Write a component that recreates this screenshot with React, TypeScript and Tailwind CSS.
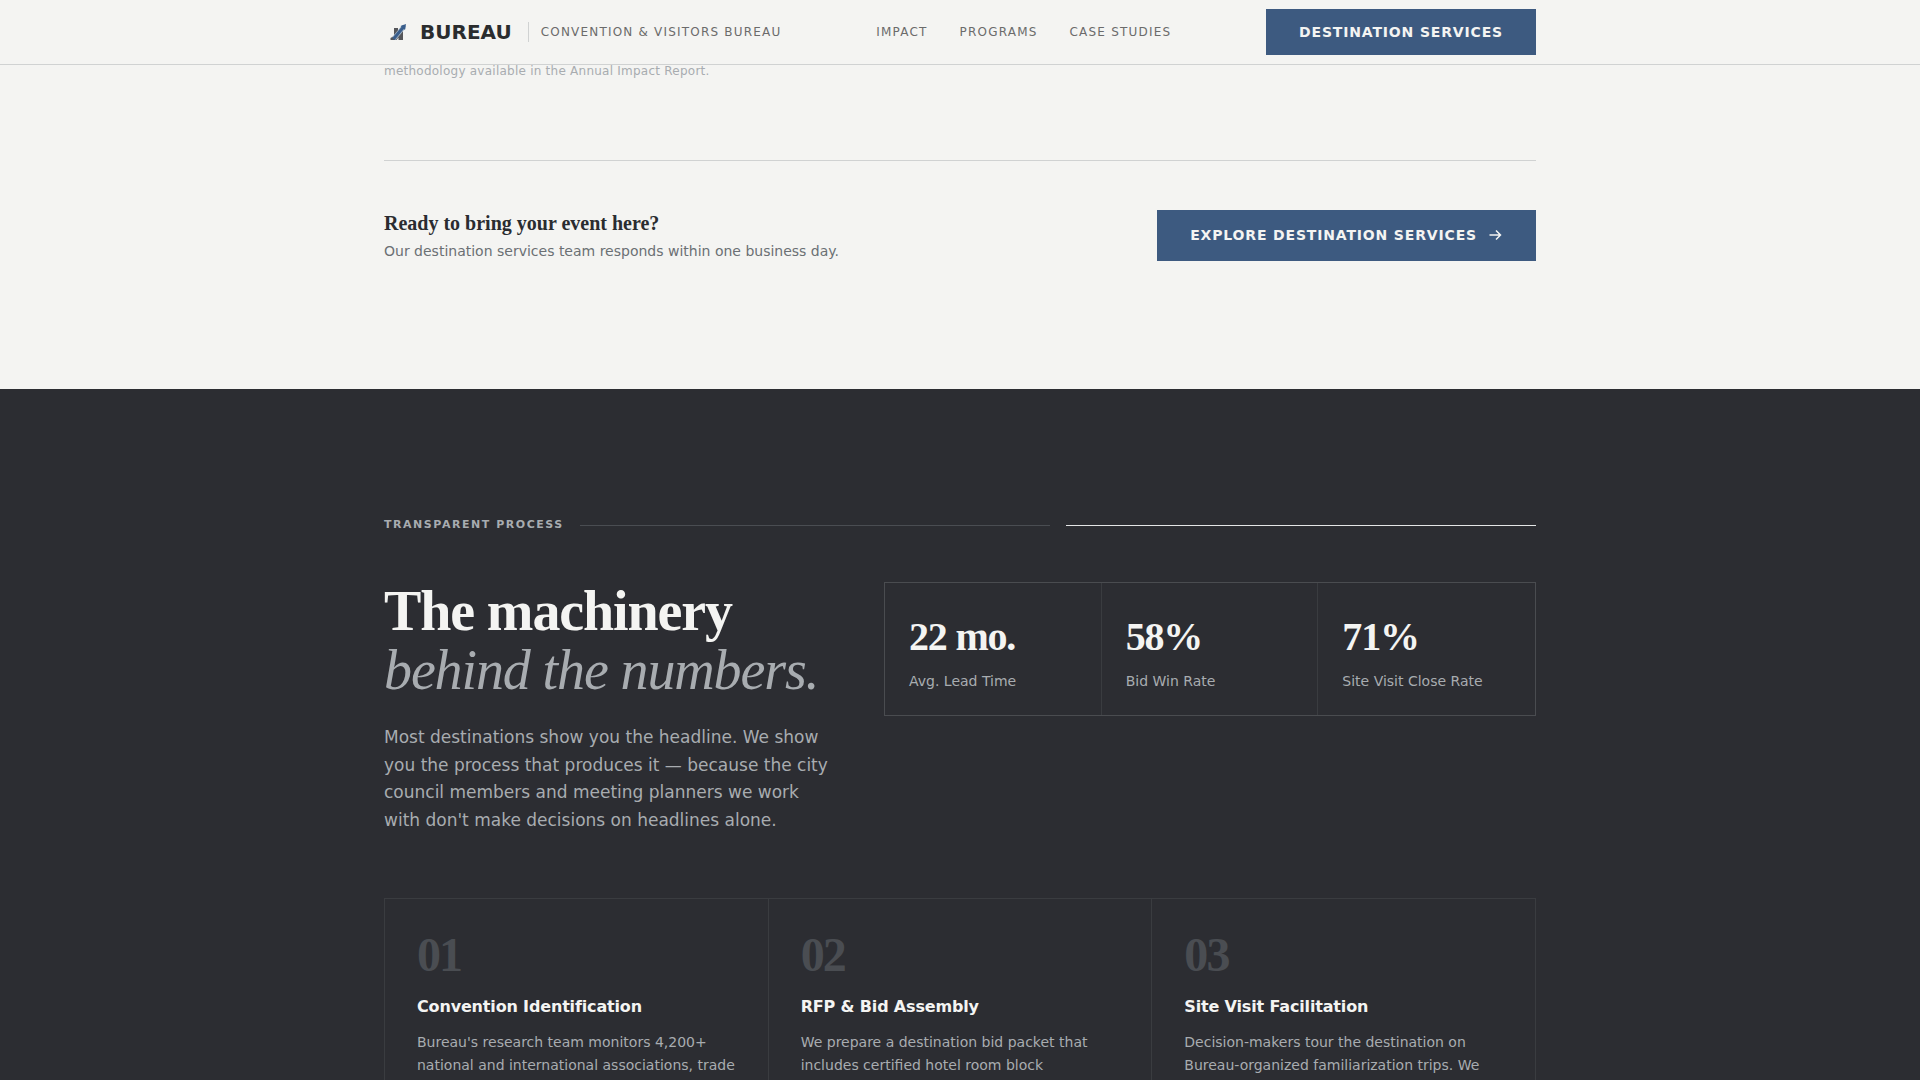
import React from "react";

const navLinks = [
  { label: "Impact", href: "#impact" },
  { label: "Programs", href: "#programs" },
  { label: "Case Studies", href: "#case-studies" },
];

const stats = [
  { value: "22 mo.", label: "Avg. Lead Time" },
  { value: "58%", label: "Bid Win Rate" },
  { value: "71%", label: "Site Visit Close Rate" },
];

const steps = [
  {
    number: "01",
    title: "Convention Identification",
    text: "Bureau's research team monitors 4,200+ national and international associations, trade",
  },
  {
    number: "02",
    title: "RFP & Bid Assembly",
    text: "We prepare a destination bid packet that includes certified hotel room block",
  },
  {
    number: "03",
    title: "Site Visit Facilitation",
    text: "Decision-makers tour the destination on Bureau-organized familiarization trips. We",
  },
];

function Logo() {
  return (
    <svg viewBox="0 0 28 28" className="size-7" aria-hidden="true">
      <path d="M6.500 22v-2l3.500-2v-8h4v3l5-2.500v11.500h-4.500v-2.500l-2 2.500z" fill="#55565a" />
      <path d="M10 20.500 20 8.500" stroke="#a9b8c8" strokeWidth="4.500" />
      <path d="M9.500 21 20.500 7.800" stroke="#3a5e8c" strokeWidth="3" />
      <path d="M16.500 8 22 6l-1 6z" fill="#3a5e8c" />
    </svg>
  );
}

function Arrow() {
  return (
    <svg viewBox="0 0 14 14" className="size-3.5" fill="none" stroke="currentColor" strokeWidth="1.500" aria-hidden="true">
      <path d="M0.500 7h11M7 2.500 11.500 7 7 11.500" />
    </svg>
  );
}

function Header() {
  return (
    <header className="fixed inset-x-0 top-0 z-10 border-b border-[#d0d2d2] bg-[#f4f4f2]">
      <div className="mx-auto flex h-16 max-w-[1200px] items-center justify-between px-6">
        <a href="#top" className="flex items-center gap-2">
          <Logo />
          <span className="text-[20px] font-bold text-[#2a2c2e]">BUREAU</span>
          <span className="ml-2 h-5 w-px bg-[#d0d2d2]" />
          <span className="ml-1 text-xs tracking-[0.1em] text-[#6b6b6b] uppercase">
            Convention &amp; Visitors Bureau
          </span>
        </a>
        <nav className="flex gap-8">
          {navLinks.map((link) => (
            <a key={link.label} href={link.href} className="text-xs tracking-[0.1em] text-[#6b6b6b] uppercase">
              {link.label}
            </a>
          ))}
        </nav>
        <a
          href="#services"
          className="border border-[#3d5a80] bg-[#3d5a80] px-8 py-[11px] text-sm leading-[22px] font-bold tracking-[0.06em] text-[#f4f4f2] uppercase"
        >
          Destination Services
        </a>
      </div>
    </header>
  );
}

function CallToAction() {
  return (
    <section className="mx-auto max-w-[1200px] px-6 pt-[61px] pb-32">
      <p className="pt-px text-xs leading-[18px] tracking-[0.02em] text-[#a8acb0]">
        methodology available in the Annual Impact Report.
      </p>
      <div className="mt-20 flex items-center justify-between border-t border-[#d0d2d2] pt-12">
        <div>
          <h2 className="font-['Liberation_Serif',serif] text-[20px] leading-7 font-bold text-[#2a2c30]">
            Ready to bring your event here?
          </h2>
          <p className="mt-1 text-sm leading-5 text-[#6b7074]">
            Our destination services team responds within one business day.
          </p>
        </div>
        <a
          href="#services"
          className="flex items-center gap-3 border border-[#3d5a80] bg-[#3d5a80] px-8 py-[13px] text-sm leading-[23px] font-bold tracking-[0.06em] text-[#f4f4f2] uppercase"
        >
          Explore Destination Services
          <Arrow />
        </a>
      </div>
    </section>
  );
}

function Process() {
  return (
    <section className="bg-[#2c2d32] pt-32 pb-32 text-[#a8acb0]">
      <div className="mx-auto max-w-[1200px] px-6">
        <div className="flex items-center gap-4">
          <span className="pb-px text-[11px] leading-4 font-bold tracking-[0.14em] uppercase">Transparent Process</span>
          <span className="h-px flex-1 bg-[#4a4d52]" />
          <span className="h-px flex-1 bg-[#e4e5e6]" />
        </div>
        <div className="mt-12 grid grid-cols-12 items-start gap-12">
          <div className="col-span-5">
            <h2 className="font-['Liberation_Serif',serif] text-[56px] leading-[59px] font-bold tracking-[-0.02em] text-[#f4f4f2]">
              The machinery
              <br />
              <em className="font-normal text-[#a8acb0]">behind the numbers.</em>
            </h2>
            <p className="mt-6 text-[17px] leading-relaxed">
              Most destinations show you the headline. We show you the process that produces it — because the city council
              members and meeting planners we work with don't make decisions on headlines alone.
            </p>
          </div>
          <dl className="col-span-7 grid grid-cols-3 divide-x divide-[#3a3c40] border border-[#4a4c50]">
            {stats.map((stat) => (
              <div key={stat.label} className="flex flex-col-reverse px-6 pt-6 pb-[23px]">
                <dt className="mt-[3px] text-sm leading-[22px]">{stat.label}</dt>
                <dd className="font-['Liberation_Serif',serif] text-[40px] leading-[60px] font-bold tracking-[-0.03em] text-[#f4f4f2]">
                  {stat.value}
                </dd>
              </div>
            ))}
          </dl>
        </div>
        <ol className="mt-[63px] grid grid-cols-3 border-t border-r border-[#3a3c40]">
          {steps.map((step) => (
            <li key={step.number} className="border-l border-[#3a3c40] p-8">
              <div className="font-['Liberation_Serif',serif] text-[48px] leading-[48px] font-bold tracking-[-0.04em] text-[#4a4d52]">
                {step.number}
              </div>
              <h3 className="mt-4 text-base leading-6 font-bold tracking-[-0.01em] text-[#f4f4f2]">{step.title}</h3>
              <p className="mt-3 text-sm leading-[23px]">{step.text}</p>
            </li>
          ))}
        </ol>
      </div>
    </section>
  );
}

export default function App() {
  return (
    <div id="top" className="h-screen overflow-hidden bg-[#f4f4f2] font-['DejaVu_Sans',sans-serif]">
      <Header />
      <main>
        <CallToAction />
        <Process />
      </main>
    </div>
  );
}
